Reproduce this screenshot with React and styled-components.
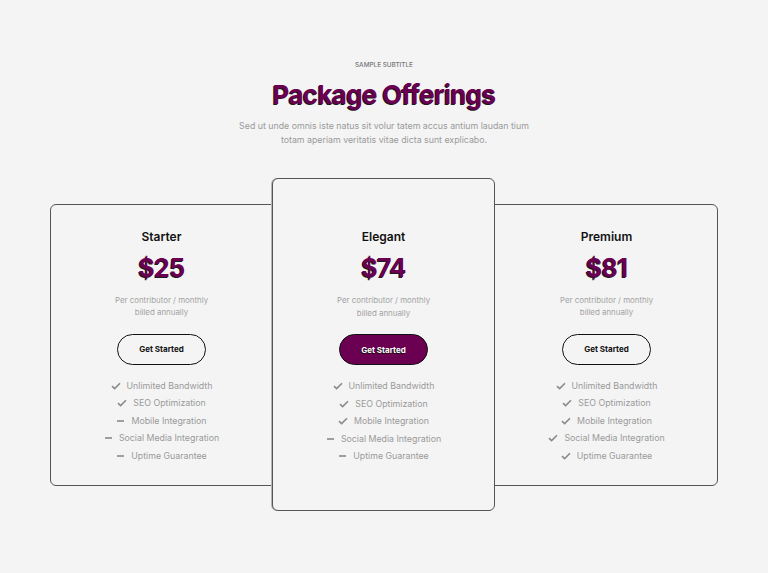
import styled, { createGlobalStyle } from "styled-components";

const GlobalStyle = createGlobalStyle`
  body {
    margin: 0;
    background: #f4f4f4;
    font-family: "Inter", "Noto Sans", sans-serif;
  }
`;

const plans = [
  {
    name: "Starter",
    price: "$25",
    side: "left",
    features: [
      ["Unlimited Bandwidth", true],
      ["SEO Optimization", true],
      ["Mobile Integration", false],
      ["Social Media Integration", false],
      ["Uptime Guarantee", false],
    ],
  },
  {
    name: "Elegant",
    price: "$74",
    featured: true,
    features: [
      ["Unlimited Bandwidth", true],
      ["SEO Optimization", true],
      ["Mobile Integration", true],
      ["Social Media Integration", false],
      ["Uptime Guarantee", false],
    ],
  },
  {
    name: "Premium",
    price: "$81",
    side: "right",
    features: [
      ["Unlimited Bandwidth", true],
      ["SEO Optimization", true],
      ["Mobile Integration", true],
      ["Social Media Integration", true],
      ["Uptime Guarantee", true],
    ],
  },
];

const Check = () => (
  <svg width="10" height="8" viewBox="0 0 10 8">
    <path d="M1 4.2 L3.6 6.6 L9 1.2" fill="none" stroke="#8a8a8a" strokeWidth="1.6" />
  </svg>
);

const Dash = () => (
  <svg width="9" height="8" viewBox="0 0 9 8">
    <path d="M1 4 H8" stroke="#8a8a8a" strokeWidth="1.6" />
  </svg>
);

const App = () => {
  return (
    <Page>
      <GlobalStyle />
      <Header>
        <Subtitle>Sample Subtitle</Subtitle>
        <Title>Package Offerings</Title>
        <Lead>
          Sed ut unde omnis iste natus sit volur tatem accus antium laudan tium
          <br />
          totam aperiam veritatis vitae dicta sunt explicabo.
        </Lead>
      </Header>
      <Cards>
        {plans.map((p) => (
          <Card key={p.name} $featured={p.featured} $side={p.side}>
            <PlanName>{p.name}</PlanName>
            <Price>{p.price}</Price>
            <Billing>
              Per contributor / monthly
              <br />
              billed annually
            </Billing>
            <Button $featured={p.featured}>Get Started</Button>
            <Features>
              {p.features.map(([label, on]) => (
                <Feature key={label}>
                  {on ? <Check /> : <Dash />}
                  {label}
                </Feature>
              ))}
            </Features>
          </Card>
        ))}
      </Cards>
    </Page>
  );
};

export default App;

const Page = styled.div`
  width: 768px;
  height: 573px;
  padding-top: 61px;
  box-sizing: border-box;
`;

const Header = styled.div`
  display: flex;
  flex-direction: column;
  align-items: center;
`;

const Subtitle = styled.div`
  font-size: 6.4px;
  text-transform: uppercase;
  color: #777;
  font-weight: 500;
`;

const Title = styled.h1`
  margin: 10px 0 0;
  font-size: 26px;
  font-weight: 700;
  letter-spacing: -0.7px;
  color: #6b0050;
  line-height: 32px;
  text-shadow: -1px 1px 0 #1a1a1a;
`;

const Lead = styled.p`
  margin: 8px 0 0;
  font-size: 8.8px;
  line-height: 14px;
  color: #9a9a9a;
  text-align: center;
`;

const Cards = styled.div`
  margin: 31px auto 0;
  width: 668px;
  display: grid;
  grid-template-columns: 223px 222px 223px;
  align-items: center;
`;

const Card = styled.div`
  display: flex;
  flex-direction: column;
  align-items: center;
  border: 1px solid #555;
  border-radius: 6px;
  background: #f4f4f4;
  box-sizing: border-box;
  padding: ${(p) => (p.$featured ? "51px 0 49px" : "25px 0 24px")};
  position: relative;
  z-index: ${(p) => (p.$featured ? 2 : 1)};
  margin-right: ${(p) => (p.$side === "left" ? "-12px" : "0")};
  margin-left: ${(p) => (p.$side === "right" ? "-12px" : p.$featured ? "-1px" : "0")};
  ${(p) => p.$side === "left" && "padding-right: 12px;"}
  ${(p) => p.$side === "right" && "padding-left: 12px;"}
  box-shadow: ${(p) => (p.$featured ? "-1px 0 0 #b5b5b5" : "none")};
`;

const PlanName = styled.div`
  font-size: 12px;
  font-weight: 600;
  color: #111;
  line-height: 14px;
`;

const Price = styled.div`
  margin-top: 9px;
  font-size: 25px;
  font-weight: 700;
  letter-spacing: -0.6px;
  color: #6b0050;
  line-height: 30px;
  text-shadow: -1px 1px 0 #1a1a1a;
`;

const Billing = styled.div`
  margin-top: 11px;
  font-size: 7.9px;
  line-height: 12.5px;
  color: #a3a3a3;
  text-align: center;
`;

const Button = styled.button`
  margin-top: 15px;
  width: 89px;
  height: 31px;
  border-radius: 16px;
  border: 1.5px solid #111;
  background: ${(p) => (p.$featured ? "#6b0052" : "transparent")};
  color: ${(p) => (p.$featured ? "#fff" : "#111")};
  font-family: inherit;
  font-size: 8px;
  font-weight: 700;
  text-shadow: ${(p) => (p.$featured ? "-1px 1px 0 #111" : "none")};
  cursor: pointer;
`;

const Features = styled.ul`
  list-style: none;
  margin: 16px 0 0;
  padding: 0;
  display: flex;
  flex-direction: column;
  align-items: center;
  gap: 7.5px;
`;

const Feature = styled.li`
  display: flex;
  align-items: center;
  gap: 6px;
  font-size: 8.8px;
  line-height: 10px;
  color: #9a9a9a;
`;
